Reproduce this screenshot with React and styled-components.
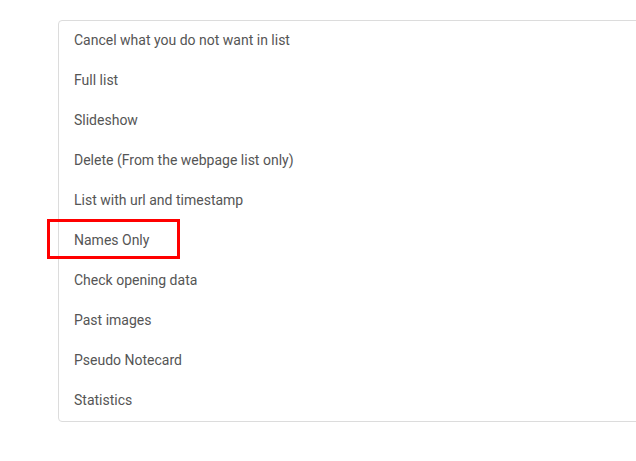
import React from "react"
import styled, { createGlobalStyle } from "styled-components"

const items = [
  "Cancel what you do not want in list",
  "Full list",
  "Slideshow",
  "Delete (From the webpage list only)",
  "List with url and timestamp",
  "Names Only",
  "Check opening data",
  "Past images",
  "Pseudo Notecard",
  "Statistics",
]

export default function App() {
  return (
    <>
      <GlobalStyle />
      <Page>
        <Menu>
          {items.map((label) => (
            <Item key={label}>
              {label}
              {label === "Names Only" && <Highlight />}
            </Item>
          ))}
        </Menu>
      </Page>
    </>
  )
}

const GlobalStyle = createGlobalStyle`
  html, body {
    margin: 0;
    background: #ffffff;
    overflow: hidden;
  }
  body {
    font-family: Roboto, "Liberation Sans", sans-serif;
  }
`

const Page = styled.div`
  padding: 20px 0 0 58px;
  width: 578px;
  overflow: hidden;
`

const Menu = styled.ul`
  list-style: none;
  margin: 0;
  padding: 0;
  width: 640px;
  border: 1px solid #dcdcdc;
  border-radius: 4px;
  background: #fff;
`

const Item = styled.li`
  position: relative;
  height: 40px;
  box-sizing: border-box;
  display: flex;
  align-items: center;
  padding: 0 0 2px 15px;
  font-size: 14px;
  color: #555555;
`

const Highlight = styled.span`
  position: absolute;
  left: -12px;
  top: -2px;
  width: 127px;
  height: 34px;
  border: 3px solid #ff0000;
`
